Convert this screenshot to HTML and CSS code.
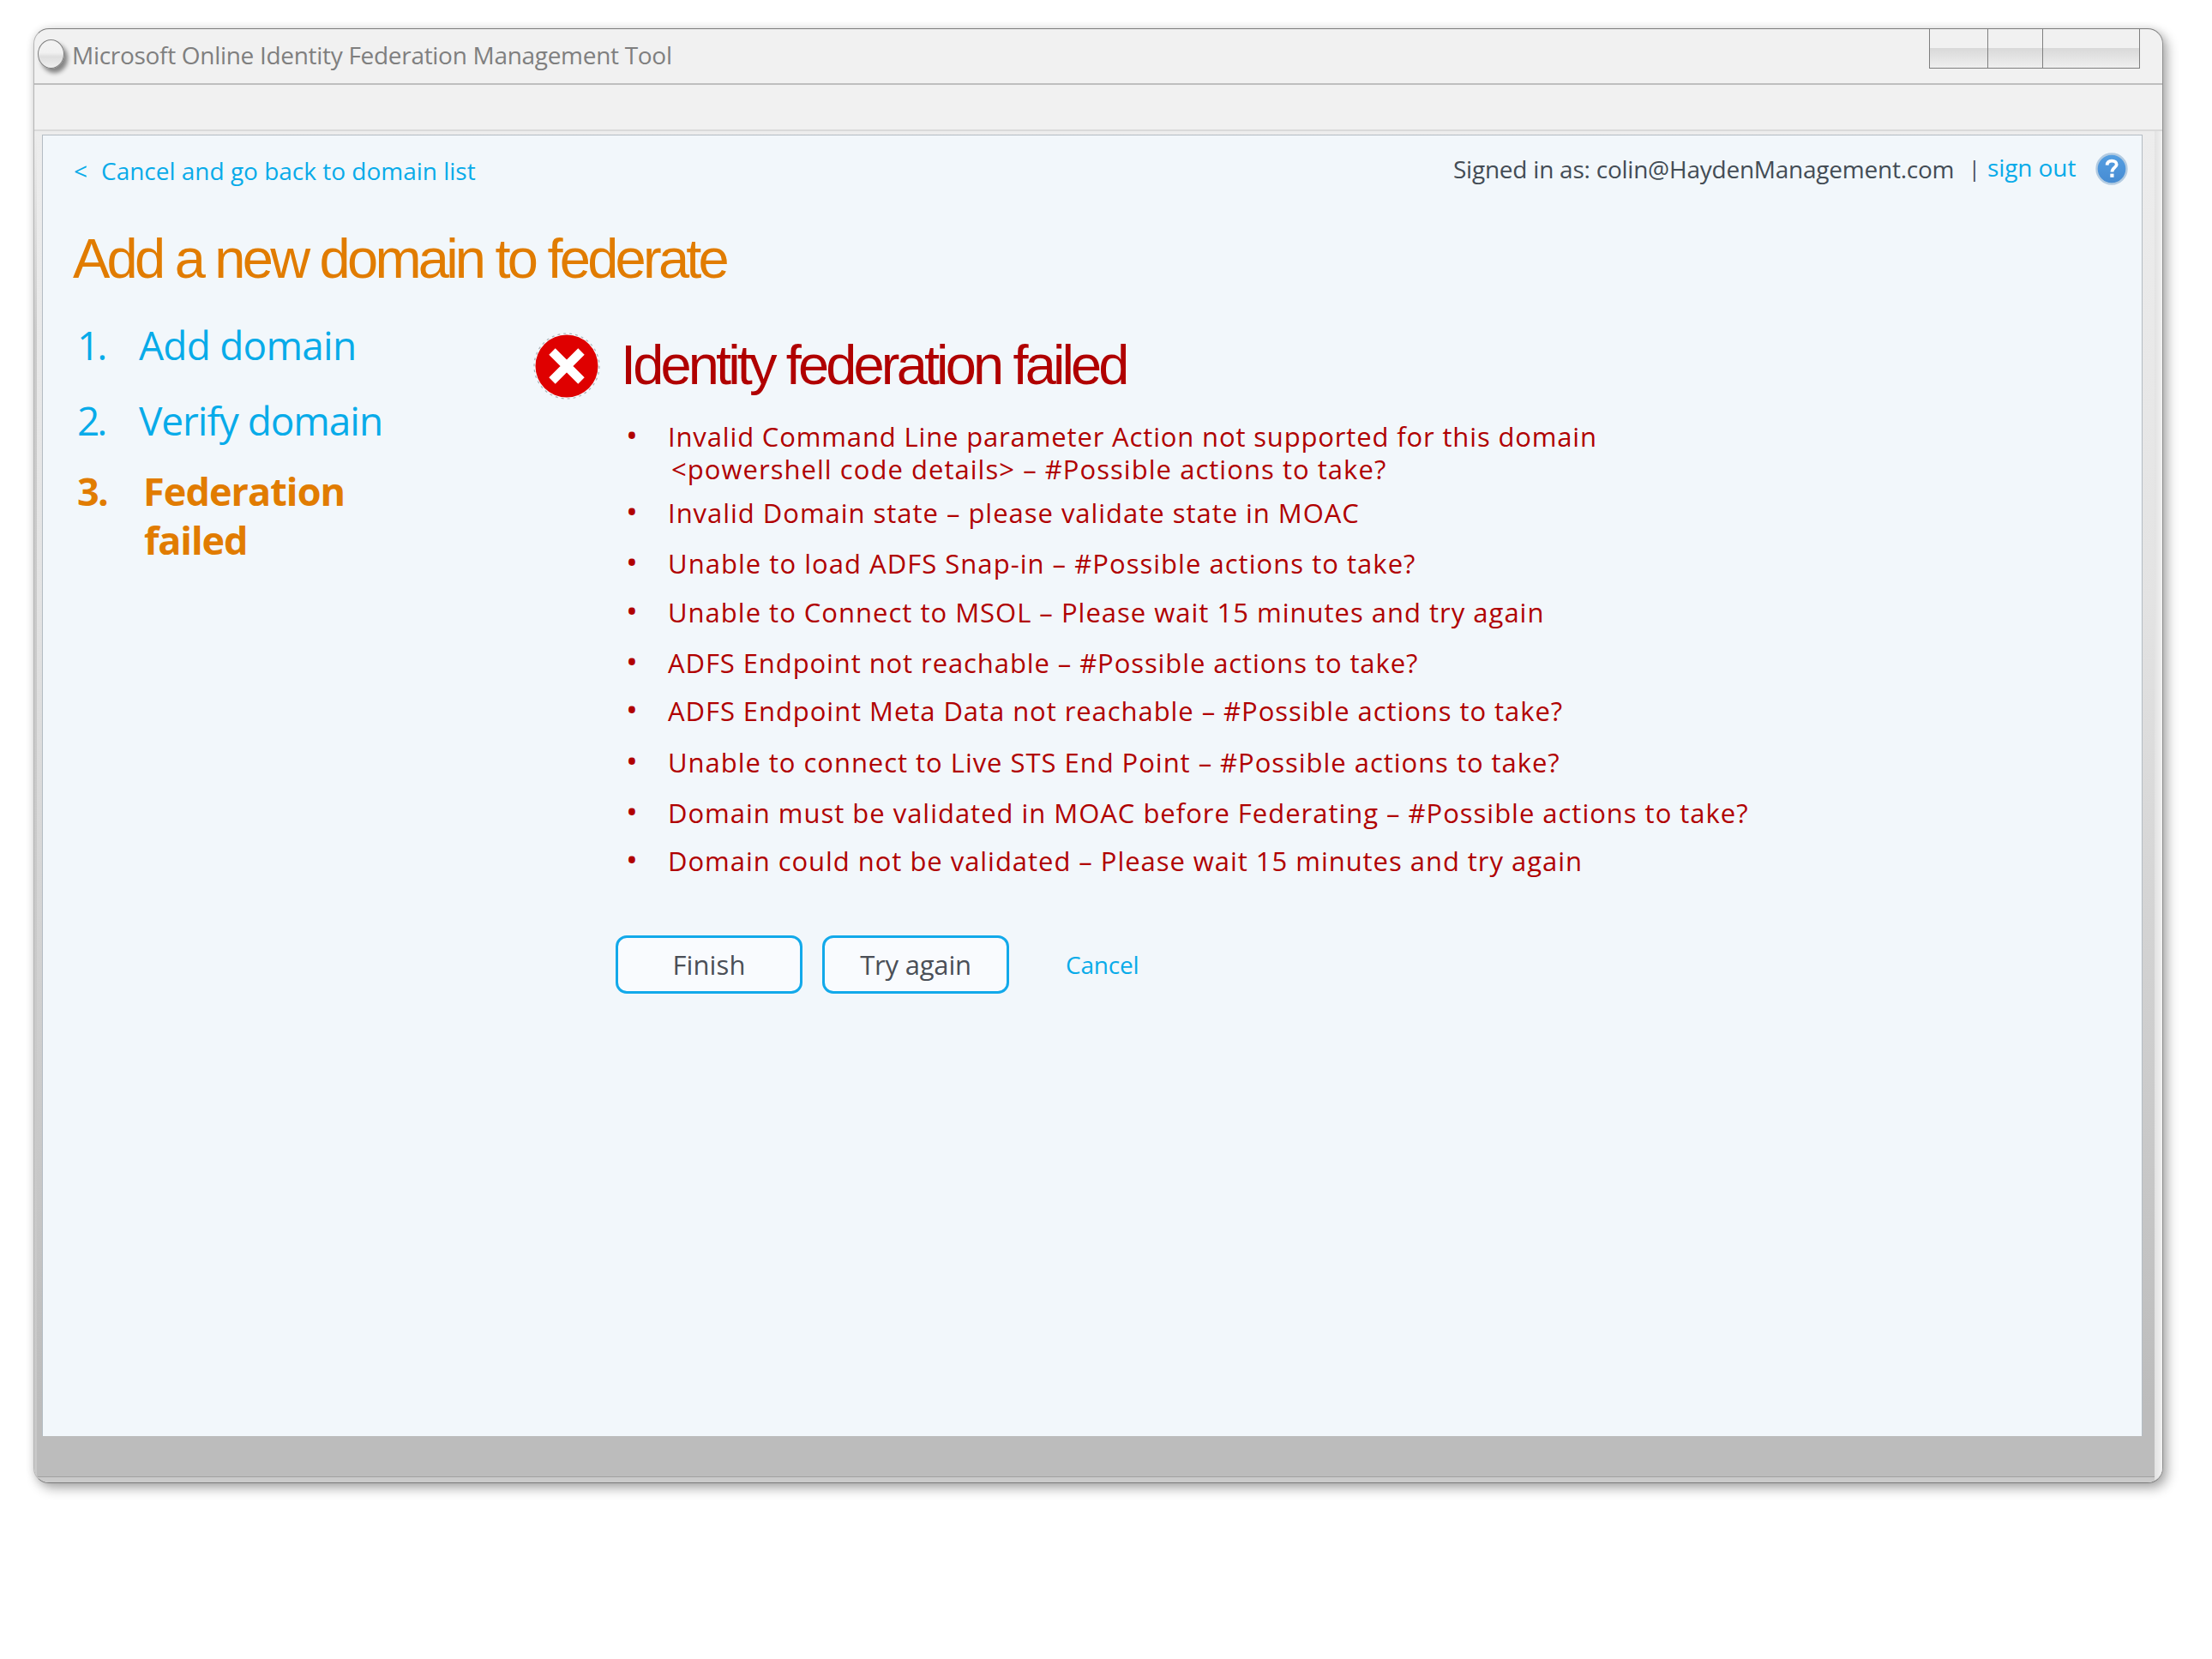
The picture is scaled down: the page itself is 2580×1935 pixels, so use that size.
FILE: index.html
```html
<!DOCTYPE html>
<html lang="en">
<head>
<meta charset="utf-8">
<title>Microsoft Online Identity Federation Management Tool</title>
<link rel="stylesheet" href="styles.css">
</head>
<body>
<div class="window">
  <header class="titlebar">
    <span class="orb"></span>
    <span class="window-title">Microsoft Online Identity Federation Management Tool</span>
    <div class="controls"><span></span><span></span><span></span></div>
  </header>
  <div class="toolbar"></div>
  <div class="frame">
    <div class="frame-inner">
      <main class="content">
        <div class="topbar">
          <a class="back"><span>&lt;</span><span class="back-label">Cancel and go back to domain list</span></a>
          <span class="user">Signed in as: colin@HaydenManagement.com</span>
          <span class="pipe">|</span>
          <a class="sign-out">sign out</a>
          <svg class="help" viewBox="0 0 38 38">
            <defs><linearGradient id="helpFill" x1="0" y1="0" x2="0" y2="1"><stop offset="0" stop-color="#559fe2"/><stop offset="1" stop-color="#468bd2"/></linearGradient></defs>
            <circle cx="19" cy="19" r="17.5" fill="url(#helpFill)" stroke="#b3cbe1" stroke-width="2.4"/>
            <path d="M13.6 14.6C13.8 11.2 16 9.6 19.2 9.6C22.5 9.6 24.7 11.3 24.7 13.9C24.7 17.4 19.4 17.6 19.4 22.6" fill="none" stroke="#fff" stroke-width="3.8"/>
            <rect x="17.3" y="24.6" width="4.2" height="4.2" fill="#fff"/>
          </svg>
        </div>
        <h1>Add a new domain to federate</h1>
        <div class="columns">
          <ol class="steps">
            <li><span class="num">1.</span><span class="label add">Add domain</span></li>
            <li><span class="num">2.</span><span class="label verify">Verify domain</span></li>
            <li class="current"><span class="num">3.</span><span class="label">Federation<br><span class="second">failed</span></span></li>
          </ol>
          <section class="result">
            <div class="result-head">
              <svg class="error" viewBox="0 0 78 78">
                <circle cx="39" cy="39" r="38" fill="#f6f8fa" stroke="#aab0b6" stroke-width="1.2" stroke-dasharray="3 4"/>
                <circle cx="39" cy="39" r="36.5" fill="#df0000"/>
                <path d="M22 22L56 56M56 22L22 56" fill="none" stroke="#fff" stroke-width="10.5"/>
              </svg>
              <h2>Identity federation failed</h2>
            </div>
            <ul class="errors">
              <li>Invalid Command Line parameter Action not supported for this domain<br><span class="detail">&lt;powershell code details&gt; – #Possible actions to take?</span></li>
              <li>Invalid Domain state – please validate state in MOAC</li>
              <li>Unable to load ADFS Snap-in – #Possible actions to take?</li>
              <li>Unable to Connect to MSOL – Please wait 15 minutes and try again</li>
              <li>ADFS Endpoint not reachable – #Possible actions to take?</li>
              <li>ADFS Endpoint Meta Data not reachable – #Possible actions to take?</li>
              <li>Unable to connect to Live STS End Point – #Possible actions to take?</li>
              <li>Domain must be validated in MOAC before Federating – #Possible actions to take?</li>
              <li>Domain could not be validated – Please wait 15 minutes and try again</li>
            </ul>
            <div class="actions">
              <button class="finish">Finish</button>
              <button class="retry">Try again</button>
              <a class="cancel">Cancel</a>
            </div>
          </section>
        </div>
      </main>
    </div>
  </div>
</div>
</body>
</html>
```
FILE: styles.css
```css
* { box-sizing: border-box; }
body {
  min-height: 1935px;
  margin: 0;
  padding: 33px 0 0 39px;
  background: #fff;
  font: 28px/38px "Open Sans", "Noto Sans", sans-serif;
  font-variant-ligatures: none;
  white-space: nowrap;
}
.window {
  display: flex;
  flex-direction: column;
  width: 2484px;
  height: 1697px;
  border: 1px solid #7d7d7d;
  border-left-color: #b5b5b5;
  border-right-color: #909090;
  border-radius: 18px;
  background: #f1f1f1;
  box-shadow: 5px 6px 14px rgba(0, 0, 0, .32), 0 0 10px rgba(0, 0, 0, .1);
  overflow: hidden;
}
.titlebar {
  display: flex;
  align-items: flex-start;
  flex: 0 0 65px;
  padding: 0 26px 0 4px;
  border-bottom: 2px solid #bfbfbf;
}
.orb {
  width: 31px;
  height: 34px;
  margin-top: 12px;
  border: 1px solid #808080;
  border-radius: 50%;
  background: linear-gradient(#f3f3f3 0, #f1f1f1 45%, #dedede 60%, #f0f0f0 100%);
  box-shadow: 4px 5px 5px rgba(0, 0, 0, .45);
}
.window-title {
  margin: 11px 0 0 9px;
  color: #7f7f7f;
  letter-spacing: -.3px;
}
.controls {
  display: grid;
  grid-template-columns: 68px 64px 113px;
  height: 46px;
  margin-left: auto;
  border: solid #7f7f7f;
  border-width: 0 0 1px 1px;
}
.controls span {
  border-right: 1px solid #7f7f7f;
  background: linear-gradient(#f1f1f1 50%, #d9d9d9 50%, #efefef 100%);
}
.toolbar {
  flex: 0 0 54px;
  border-bottom: 2px solid #dadada;
}
.frame {
  flex: 1;
  padding: 0 9px 6px 3px;
  background: linear-gradient(#ededed, #cbcbcb 15%, #c8c8c8) left / 3px 100% no-repeat,
    linear-gradient(to right, #e2e2e2, #f2f2f2) right / 9px 100% no-repeat,
    #cacaca;
}
.frame-inner {
  height: 100%;
  padding: 4px 14px 0 6px;
  border-bottom: 1px solid #a2a2a2;
  background: linear-gradient(#ededed, #e3e3e3 35%, #bcbcbc 95%);
}
.content {
  width: 2450px;
  height: 1518px;
  padding-left: 35px;
  border: solid #b4bcc3;
  border-width: 1px 1px 0 1px;
  background: #f2f7fb;
}
.topbar {
  display: grid;
  grid-template-columns: 1fr 601px 22px 126px 38px;
  align-items: start;
  height: 107px;
  padding: 18px 16px 0 1px;
}
.back, .sign-out, .cancel { color: #08abe9; }
.back { display: flex; padding-top: 4px; }
.back-label { margin-left: 16px; letter-spacing: -.01px; }
.user { padding-top: 2px; color: #434c55; letter-spacing: -.233px; }
.pipe { padding-top: 1px; font-size: 25px; line-height: 38px; color: #434c55; }
.sign-out { letter-spacing: -.1px; }
.help { width: 38px; height: 38px; margin-top: 2px; }
h1, h2 {
  margin: 0;
  font: 65px/73px "Liberation Sans", Arial, sans-serif;
}
h1 { color: #e17c00; letter-spacing: -3.76px; }
.columns {
  display: grid;
  grid-template-columns: 537px 1fr;
  padding-top: 33px;
}
.steps {
  display: grid;
  grid-template-rows: 88px 85px auto;
  align-content: start;
  margin: 0;
  padding: 0 0 0 5px;
  list-style: none;
  font-size: 46px;
  line-height: 62px;
  color: #08abe9;
}
.steps li { display: flex; }
.num { flex: 0 0 72px; letter-spacing: -3px; }
.add { letter-spacing: -.776px; }
.verify { letter-spacing: -1.069px; }
.steps .current {
  font-size: 45px;
  line-height: 57px;
  font-weight: 700;
  color: #e17c00;
  letter-spacing: -.95px;
}
.current .num { flex-basis: 77px; letter-spacing: -1.7px; }
.second { padding-left: 1px; letter-spacing: -1.141px; }
.result { padding-top: 17px; }
.result-head { display: flex; }
.error { width: 78px; height: 78px; }
h2 { padding-top: 1px; margin-left: 24px; color: #b00000; letter-spacing: -3.867px; }
.errors {
  display: grid;
  grid-template-rows: 89px 59px 57px 59px 56px 60px 59px 56px 38px;
  margin: 24px 0 0;
  padding: 0 0 0 108px;
  list-style: none;
  font-size: 31px;
  line-height: 38px;
  color: #b00000;
}
.errors li { display: block; letter-spacing: .85px; }
.errors li::before {
  content: "•";
  display: inline-block;
  width: 49px;
  font-size: 37px;
  line-height: 30px;
  letter-spacing: 0;
}
.errors li:nth-child(2) { letter-spacing: .97px; }
.errors li:nth-child(3) { letter-spacing: 1.03px; }
.errors li:nth-child(4) { letter-spacing: 1px; }
.errors li:nth-child(5) { letter-spacing: .91px; }
.errors li:nth-child(6) { letter-spacing: .94px; }
.errors li:nth-child(7) { letter-spacing: .965px; }
.errors li:nth-child(8) { letter-spacing: .98px; }
.errors li:nth-child(9) { letter-spacing: .96px; }
.detail { padding-left: 53px; letter-spacing: 1.04px; }
.actions {
  display: flex;
  align-items: center;
  padding: 68px 0 0 96px;
}
button {
  width: 218px;
  height: 68px;
  margin: 0 23px 0 0;
  padding: 0;
  border: 3px solid #12a9ea;
  border-radius: 13px;
  background: #f9fbfe;
  color: #4a4f57;
  font: 31px/42px "Open Sans", "Noto Sans", sans-serif;
}
.finish { letter-spacing: .1px; }
.retry { letter-spacing: -.19px; }
.cancel { margin-left: 43px; letter-spacing: -.21px; }
```
